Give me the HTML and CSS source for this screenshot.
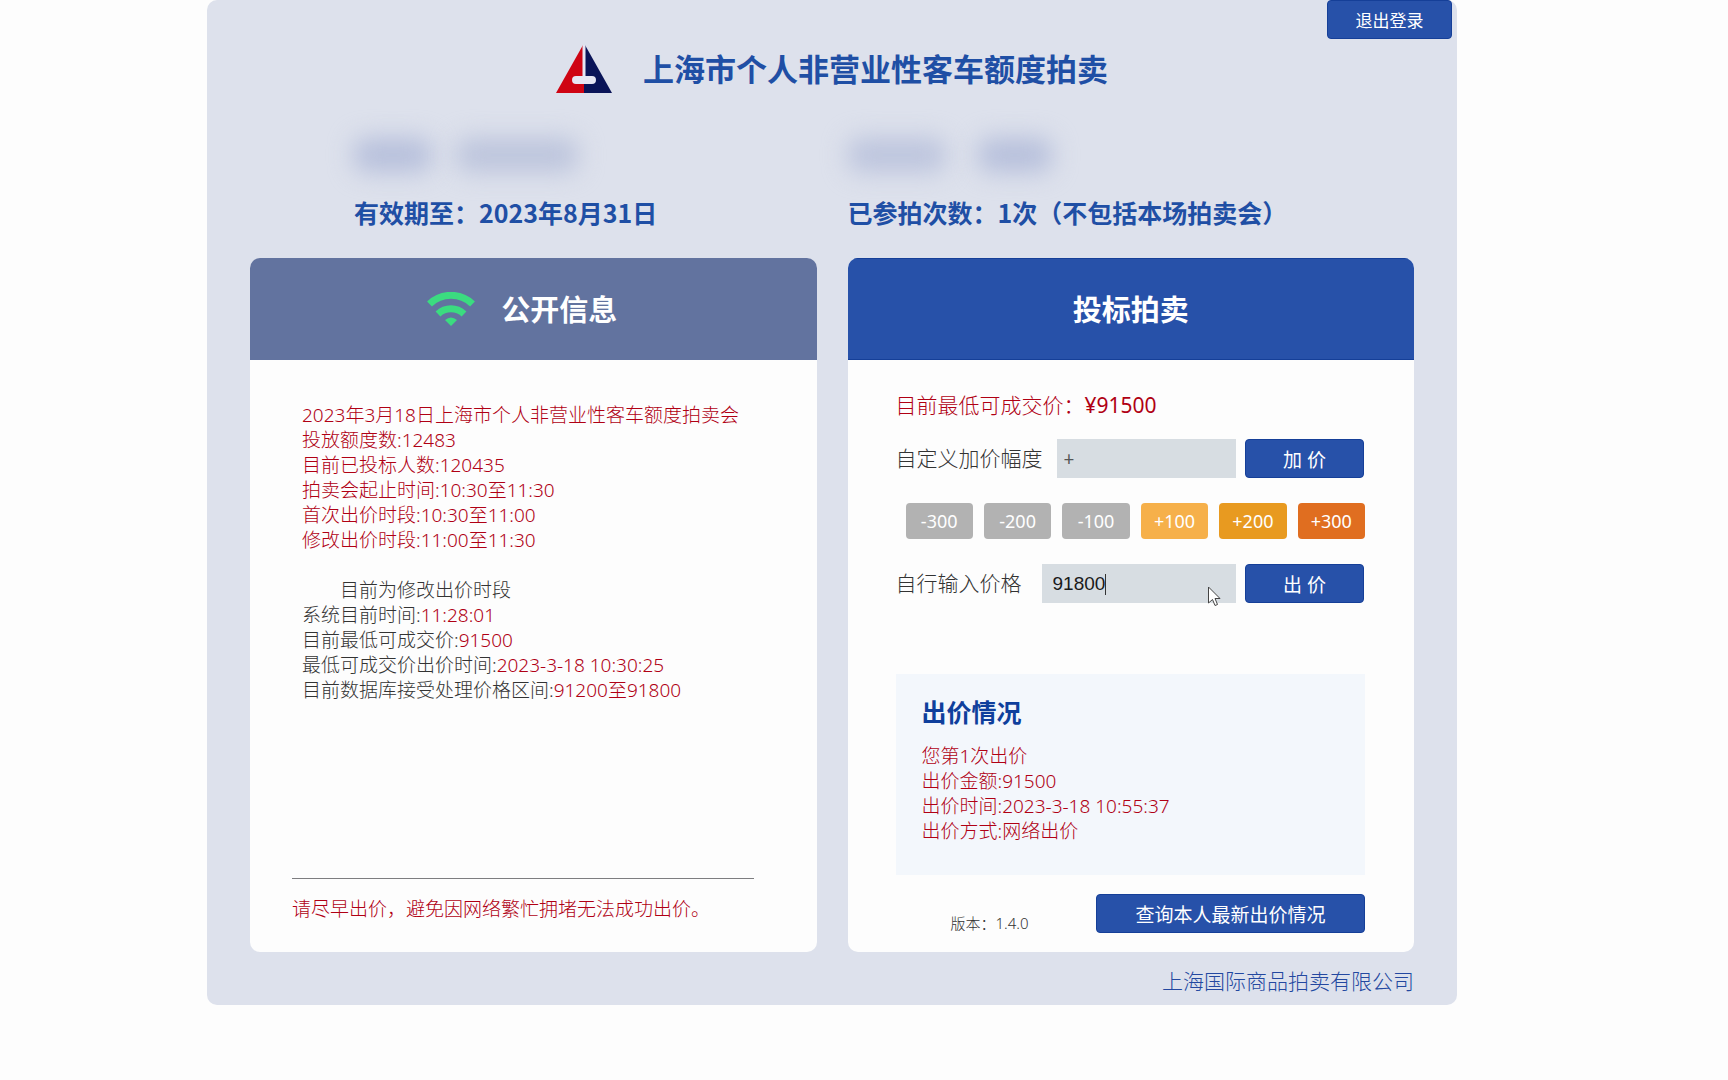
FILE: index.html
```html
<!DOCTYPE html>
<html lang="zh-CN">
<head>
<meta charset="utf-8">
<meta name="viewport" content="width=device-width, initial-scale=1">
<title>上海市个人非营业性客车额度拍卖</title>
<link rel="stylesheet" href="styles.css">
</head>
<body>
<main class="panel">
  <div class="topbar"><button type="button" class="btn btn-logout">退出登录</button></div>

  <header class="brand">
    <svg class="logo" viewBox="0 0 56 48" aria-hidden="true">
      <path fill="#cf0413" d="M27 0 0 48h28V0z"/>
      <path fill="#0a1458" d="M29 0 56 48H28V0z"/>
      <path fill="#e6e6f3" d="M26.5 0h3v31H36a4 4 0 0 1 0 8H20a4 4 0 0 1 0-8h6.500z"/>
    </svg>
    <h1 class="title">上海市个人非营业性客车额度拍卖</h1>
  </header>

  <section class="columns bidder">
    <div class="bidder-left">
      <div class="masked"><span class="mask mask-name"></span><span class="mask mask-value"></span></div>
      <p class="bidder-text">有效期至：2023年8月31日</p>
    </div>
    <div>
      <div class="masked"><span class="mask mask-label"></span><span class="mask mask-code"></span></div>
      <p class="bidder-text">已参拍次数：1次（不包括本场拍卖会）</p>
    </div>
  </section>

  <div class="columns">
    <section class="card">
      <div class="card-head card-head-info">
        <svg class="wifi" viewBox="0 0 48 34" aria-hidden="true">
          <g fill="none" stroke="#3bdc80" stroke-width="7">
            <path d="M2.500 12a31 31 0 0 1 43 0"/>
            <path d="M11 22a19 19 0 0 1 26 0"/>
          </g>
          <path fill="#3bdc80" d="M24 34l-6-6q6-5 12 0z"/>
        </svg>
        <h2 class="card-title">公开信息</h2>
      </div>
      <div class="card-body info-body">
        <div class="info-text">
          <div class="red">
            <p>2023年3月18日上海市个人非营业性客车额度拍卖会</p>
            <p>投放额度数:12483</p>
            <p>目前已投标人数:120435</p>
            <p>拍卖会起止时间:10:30至11:30</p>
            <p>首次出价时段:10:30至11:00</p>
            <p>修改出价时段:11:00至11:30</p>
          </div>
          <div class="status">
            <p class="indent">目前为修改出价时段</p>
            <p>系统目前时间:<span class="red">11:28:01</span></p>
            <p>目前最低可成交价:<span class="red">91500</span></p>
            <p>最低可成交价出价时间:<span class="red">2023-3-18 10:30:25</span></p>
            <p>目前数据库接受处理价格区间:<span class="red">91200至91800</span></p>
          </div>
        </div>
        <p class="notice red">请尽早出价，避免因网络繁忙拥堵无法成功出价。</p>
      </div>
    </section>

    <section class="card">
      <div class="card-head card-head-bid"><h2 class="card-title">投标拍卖</h2></div>
      <form class="card-body bid-body">
        <p class="price red">目前最低可成交价：<span class="price-value">¥91500</span></p>
        <div class="row">
          <label class="label label-step" for="step">自定义加价幅度</label>
          <input class="field field-step" id="step" type="text" value="+">
          <button type="button" class="btn btn-bid">加 价</button>
        </div>
        <div class="row steps">
          <button type="button" class="step">-300</button>
          <button type="button" class="step">-200</button>
          <button type="button" class="step">-100</button>
          <button type="button" class="step step-100">+100</button>
          <button type="button" class="step step-200">+200</button>
          <button type="button" class="step step-300">+300</button>
        </div>
        <div class="row">
          <label class="label label-price" for="price">自行输入价格</label>
          <div class="field-wrap">
            <input class="field field-price" id="price" type="text" value="91800">
            <span class="caret"></span>
            <svg class="pointer" viewBox="0 0 13 21" aria-hidden="true">
              <path fill="#fff" stroke="#444" d="M.5 1v16l4-3.500 2.500 6 2.500-1-2.500-6h5z"/>
            </svg>
          </div>
          <button type="button" class="btn btn-bid">出 价</button>
        </div>
        <section class="result">
          <h3 class="result-title">出价情况</h3>
          <div class="red">
            <p>您第1次出价</p>
            <p>出价金额:91500</p>
            <p>出价时间:2023-3-18 10:55:37</p>
            <p>出价方式:网络出价</p>
          </div>
        </section>
        <div class="bid-foot">
          <p class="version">版本：1.4.0</p>
          <button type="button" class="btn btn-query">查询本人最新出价情况</button>
        </div>
      </form>
    </section>
  </div>

  <footer class="company">上海国际商品拍卖有限公司</footer>
</main>
</body>
</html>
```

FILE: styles.css
```css
* { box-sizing: border-box; }

body {
  margin: 0;
  padding: 0 64px 0 0;
  background: #fdfdfd;
  color: #333;
  font: 300 19px/25px "Noto Sans", "Noto Sans CJK SC", sans-serif;
}

h1, h2, h3, p { margin: 0; }
button, input { font-family: inherit; }
.red { color: #b00014; }

.panel {
  max-width: 1250px;
  margin: 0 auto;
  padding: 0 43px 9px;
  border-radius: 10px;
  background: #dde1ec;
}

.btn {
  height: 39px;
  padding: 0;
  border: 1px solid #153f98;
  border-radius: 4px;
  background: #2751a9;
  color: #fff;
  font-size: 19px;
  font-weight: 400;
}

.topbar {
  display: flex;
  justify-content: flex-end;
  margin-right: -38px;
}
.btn-logout { width: 125px; font-size: 17px; }

.brand {
  display: flex;
  align-items: center;
  justify-content: center;
  gap: 31px;
  margin-top: 6px;
}
.logo { width: 56px; height: 48px; }
.title { color: #1f4fa5; font-size: 31px; line-height: 48px; font-weight: 700; }

.columns {
  display: grid;
  grid-template-columns: 1fr 1fr;
  gap: 31px;
}

.bidder { margin: 43px 0 29px; color: #1f4fa5; }
.bidder-left { padding-left: 104px; }
.bidder-text {
  font: 700 25px/34px "Noto Sans CJK SC", sans-serif;
  white-space: nowrap;
}
.masked { display: flex; margin-bottom: 23px; padding-top: 2px; }
.mask { height: 34px; border-radius: 12px; background: #b6bfdb; filter: blur(12px); }
.mask-name { width: 78px; margin-right: 24px; }
.mask-value { width: 122px; background: #bcc4dc; }
.mask-label { width: 98px; margin-right: 32px; background: #bcc4dd; }
.mask-code { width: 74px; }

.card {
  display: flex;
  flex-direction: column;
  overflow: hidden;
  border-radius: 10px;
  background: #fdfdfd;
}
.card-head {
  display: flex;
  align-items: center;
  justify-content: center;
  height: 102px;
}
.card-head-info { gap: 26px; padding-right: 22px; background: #62739f; }
.card-head-bid { border: solid #153f98; border-width: 1px 0; background: #2751a9; }
.card-title { padding-top: 2px; color: #fff; font-size: 29px; line-height: 40px; font-weight: 700; }
.wifi { width: 48px; height: 34px; }
.card-body { flex: 1; display: flex; flex-direction: column; }

.info-body { justify-content: space-between; padding: 43px 63px 30px 42px; }
.info-text { padding-left: 10px; white-space: nowrap; }
.status { margin-top: 25px; }
.indent { text-indent: 2em; }
.notice { padding-top: 18px; border-top: 1px solid #7d7d80; }

.bid-body { padding: 30px 49px 19px 48px; }
.price { margin-bottom: 19px; font-size: 21px; line-height: 30px; }
.price-value { font-weight: 400; }
.row { display: flex; margin-bottom: 25px; padding-right: 1px; }
.label { font-size: 21px; line-height: 39px; white-space: nowrap; }
.label-step { width: 161px; }
.label-price { width: 146px; }
.field {
  flex: 1;
  min-width: 0;
  width: 100%;
  height: 39px;
  padding: 0 7px;
  border: 0;
  border-radius: 0;
  outline: 0;
  background: #d7dde2;
  color: #555;
  font-size: 19px;
}
.field-wrap { position: relative; flex: 1; min-width: 0; }
.field-price { padding: 0 11px; color: #1a1a1a; font-family: "Liberation Sans", Arial, sans-serif; }
.caret { position: absolute; left: 63px; top: 10px; width: 1px; height: 21px; background: #333; }
.pointer { position: absolute; right: 15px; top: 22px; width: 13px; height: 21px; }
.btn-bid { width: 119px; margin-left: 9px; }

.steps { justify-content: space-between; gap: 11px; padding: 0 0 0 10px; }
.step {
  flex: 1;
  height: 36px;
  padding: 0;
  border: 0;
  border-radius: 4px;
  background: #b2b2b2;
  color: #fff;
  font-size: 18px;
}
.step-100 { background: #f6b04a; }
.step-200 { background: #e89a20; }
.step-300 { background: #e06e20; }

.result {
  min-height: 201px;
  margin-top: 46px;
  padding: 20px 26px;
  background: #f3f7fc;
}
.result-title { margin-bottom: 14px; color: #0f3f9c; font-size: 25px; line-height: 36px; font-weight: 700; }

.bid-foot {
  display: flex;
  justify-content: space-between;
  margin-top: 19px;
  padding-left: 55px;
}
.version { padding-top: 19px; font-size: 15px; line-height: 20px; }
.btn-query { width: 269px; }

.company {
  margin-top: 14px;
  color: #2348a0;
  font-size: 21px;
  line-height: 30px;
  text-align: right;
}
```
